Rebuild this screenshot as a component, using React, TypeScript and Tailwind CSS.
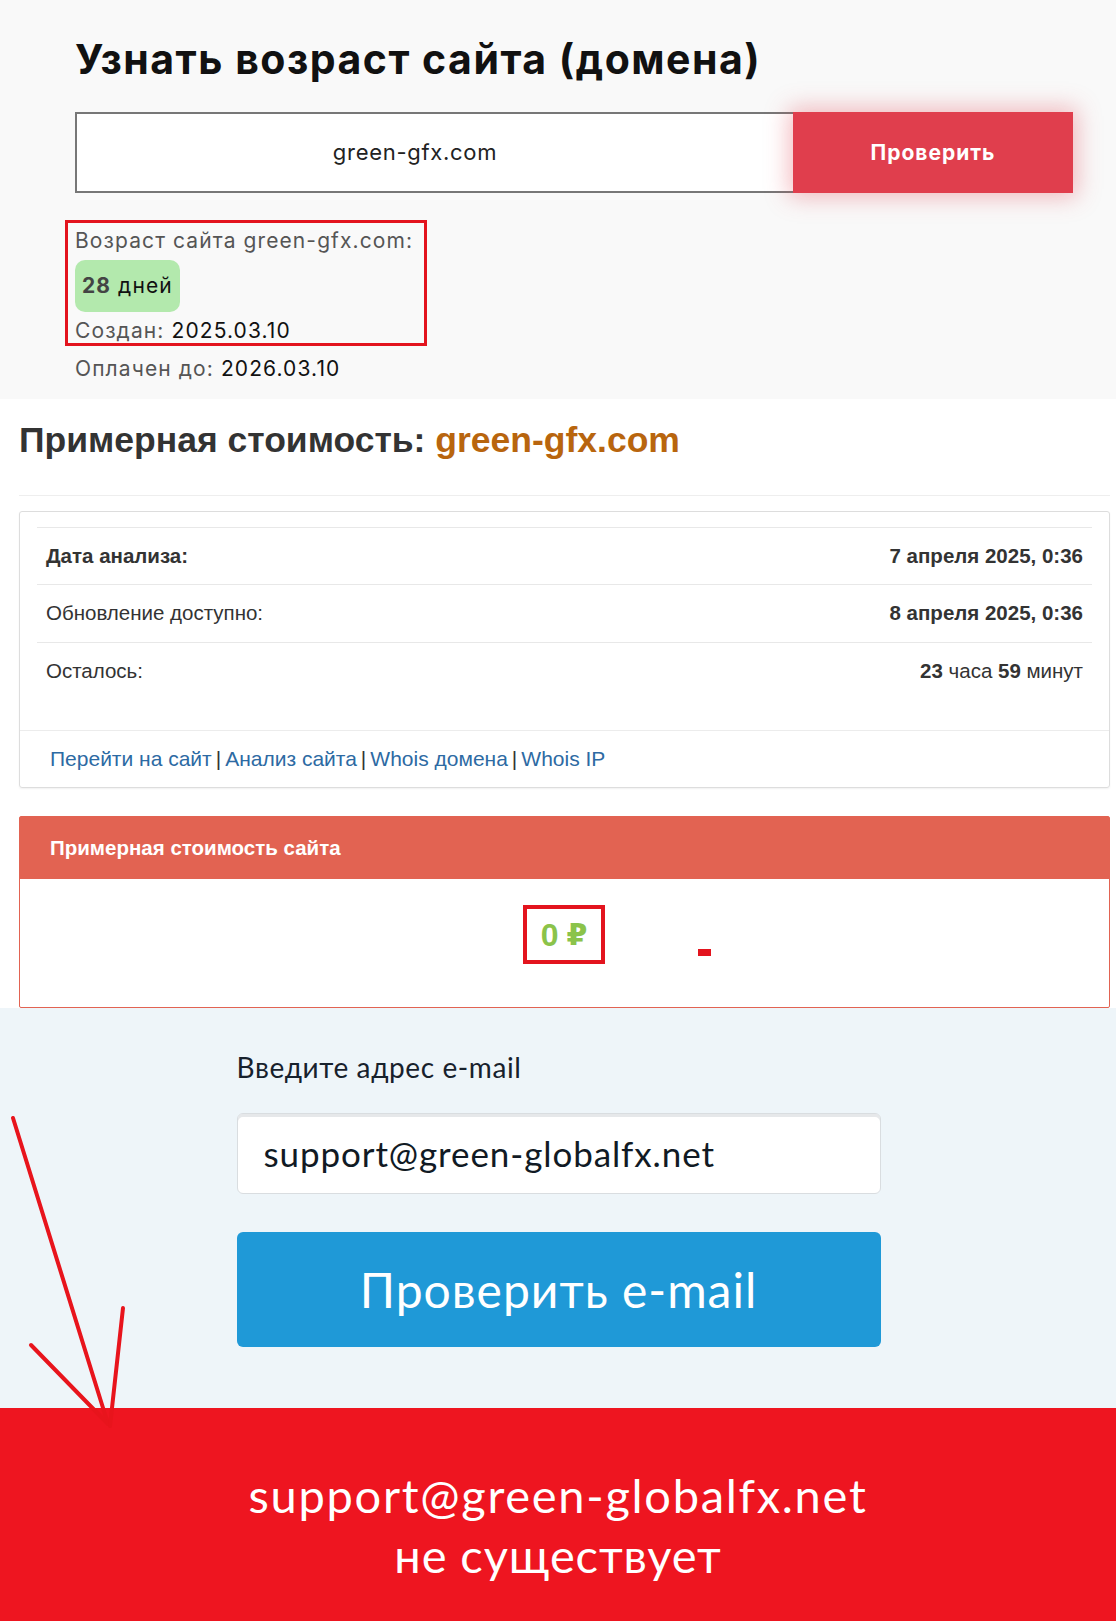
import React from "react";

export default function App() {
  return (
    <div className="relative w-[1116px] min-h-[1621px] bg-white overflow-hidden">
      {/* Top section */}
      <div className="bg-[#f9f9f9] pl-[65px] pt-[35px] pb-[13px] font-['Inter',sans-serif]">
        <h1 className="pl-[10px] text-[41px] leading-[48px] font-bold text-[#111] tracking-[1.5px]">
          Узнать возраст сайта (домена)
        </h1>
        <div className="ml-[10px] mt-[29px] flex w-[998px] h-[81px]">
          <div className="flex-1 border-2 border-[#777] border-r-0 bg-white flex items-center justify-center pr-[40px] text-[22px] text-[#222] tracking-[0.7px]">
            green-gfx.com
          </div>
          <button className="w-[280px] bg-[#e03e4d] text-white font-bold text-[21px] tracking-[1px] shadow-[0_0_22px_4px_rgba(224,62,77,0.35)]">
            Проверить
          </button>
        </div>
        <div className="mt-[27px] w-[362px] border-[3px] border-[#e3141e] pl-[7px] pt-[1px] h-[126px] overflow-hidden text-[21px] text-[#555] tracking-[1.1px]">
          <div className="leading-[34px]">Возраст сайта green-gfx.com:</div>
          <div className="mt-[2px] inline-flex items-center h-[52px] px-[7px] rounded-[10px] bg-[#b3e9ad] text-[21px] text-[#111]">
            <span className="font-bold text-[#444] mr-[7px]">28</span>дней
          </div>
          <div className="leading-[34px] mt-[2px]">
            Создан: <span className="text-[#111]">2025.03.10</span>
          </div>
        </div>
        <div className="pl-[10px] mt-[6px] leading-[34px] text-[21px] text-[#555] tracking-[1.1px]">
          Оплачен до: <span className="text-[#111]">2026.03.10</span>
        </div>
      </div>

      {/* Cost section */}
      <div className="pl-[19px] pr-[6px] pt-[19px] font-['Liberation_Sans',Arial,sans-serif]">
        <h2 className="text-[35.5px] leading-[44px] font-bold text-[#333]">
          Примерная стоимость: <span className="text-[#b8650e]">green-gfx.com</span>
        </h2>
        <div className="mt-[33px] h-px bg-[#eee]" />
        <div className="mt-[15px] border border-[#ddd] rounded-[3px] shadow-[0_1px_2px_rgba(0,0,0,0.06)]">
          <div className="px-[17px] pt-[15px] pb-[30px]">
            <div className="border-t border-[#e8e8e8] flex justify-between items-center h-[57px] px-[9px] text-[20.5px] text-[#333]">
              <span className="font-bold">Дата анализа:</span>
              <span className="font-bold">7 апреля 2025, 0:36</span>
            </div>
            <div className="border-t border-[#e8e8e8] flex justify-between items-center h-[58px] px-[9px] text-[20.5px] text-[#333]">
              <span>Обновление доступно:</span>
              <span className="font-bold">8 апреля 2025, 0:36</span>
            </div>
            <div className="border-t border-[#e8e8e8] flex justify-between items-center h-[58px] px-[9px] text-[20.5px] text-[#333]">
              <span>Осталось:</span>
              <span>
                <b>23</b> часа <b>59</b> минут
              </span>
            </div>
          </div>
          <div className="border-t border-[#ececec] h-[57px] flex items-center px-[30px] text-[21px] text-[#333]">
            <a className="text-[#2d6aa3]">Перейти на сайт</a>
            <span className="mx-[4px]">|</span>
            <a className="text-[#2d6aa3]">Анализ сайта</a>
            <span className="mx-[4px]">|</span>
            <a className="text-[#2d6aa3]">Whois домена</a>
            <span className="mx-[4px]">|</span>
            <a className="text-[#2d6aa3]">Whois IP</a>
          </div>
        </div>

        <div className="mt-[28px] border border-[#e26352] rounded-[2px]">
          <div className="h-[62px] bg-[#e26352] flex items-center px-[30px] text-white font-bold text-[20.5px]">
            Примерная стоимость сайта
          </div>
          <div className="relative h-[128px] flex justify-center pt-[26px]">
            <div className="mr-[1px] h-[59px] w-[82px] border-[4px] border-[#e3141e] flex items-center justify-center text-[32px] font-bold text-[#8bc34a]">
              <span>0</span>
              <span className="ml-[8px] font-['DejaVu_Sans',sans-serif] text-[30px]">₽</span>
            </div>
            <div className="absolute left-[678px] top-[70px] w-[13px] h-[7px] bg-[#e3141e]" />
          </div>
        </div>
      </div>

      {/* Email section */}
      <div className="bg-[#eef5f9] pt-[42px] pb-[61px] font-['Lato',sans-serif]">
        <div className="w-[645px] mx-auto pl-[1px]">
          <div className="text-[28px] leading-[34px] text-[#17212c] tracking-[0.6px]">Введите адрес e-mail</div>
          <div className="mt-[29px] h-[81px] rounded-[6px] border border-[#d9dde0] bg-white flex items-center pl-[26px] text-[35px] text-[#111a24] tracking-[0.9px] shadow-[inset_0_3px_0_#e6e8ea]">
            support@green-globalfx.net
          </div>
          <button className="mt-[38px] w-full h-[115px] rounded-[6px] bg-[#1f99d7] text-white text-[48px] tracking-[1px]">
            Проверить e-mail
          </button>
        </div>
      </div>

      {/* Result */}
      <div className="bg-[#ee1520] h-[214px] flex flex-col items-center pt-[59px] font-['Lato',sans-serif] text-white">
        <div className="text-[47px] leading-[56px] tracking-[1.7px]">support@green-globalfx.net</div>
        <div className="text-[47px] leading-[56px] mt-[4px] tracking-[0.9px]">не существует</div>
      </div>

      {/* Annotation arrow */}
      <svg
        className="absolute left-0 top-0 pointer-events-none"
        width="1116"
        height="1621"
        viewBox="0 0 1116 1621"
      >
        <g stroke="#e8141c" strokeWidth="4" strokeLinecap="round" fill="none">
          <path d="M13 1118 L108 1424" />
          <path d="M31 1345 L108 1424" />
          <path d="M123 1308 L110 1426" />
        </g>
      </svg>
    </div>
  );
}
